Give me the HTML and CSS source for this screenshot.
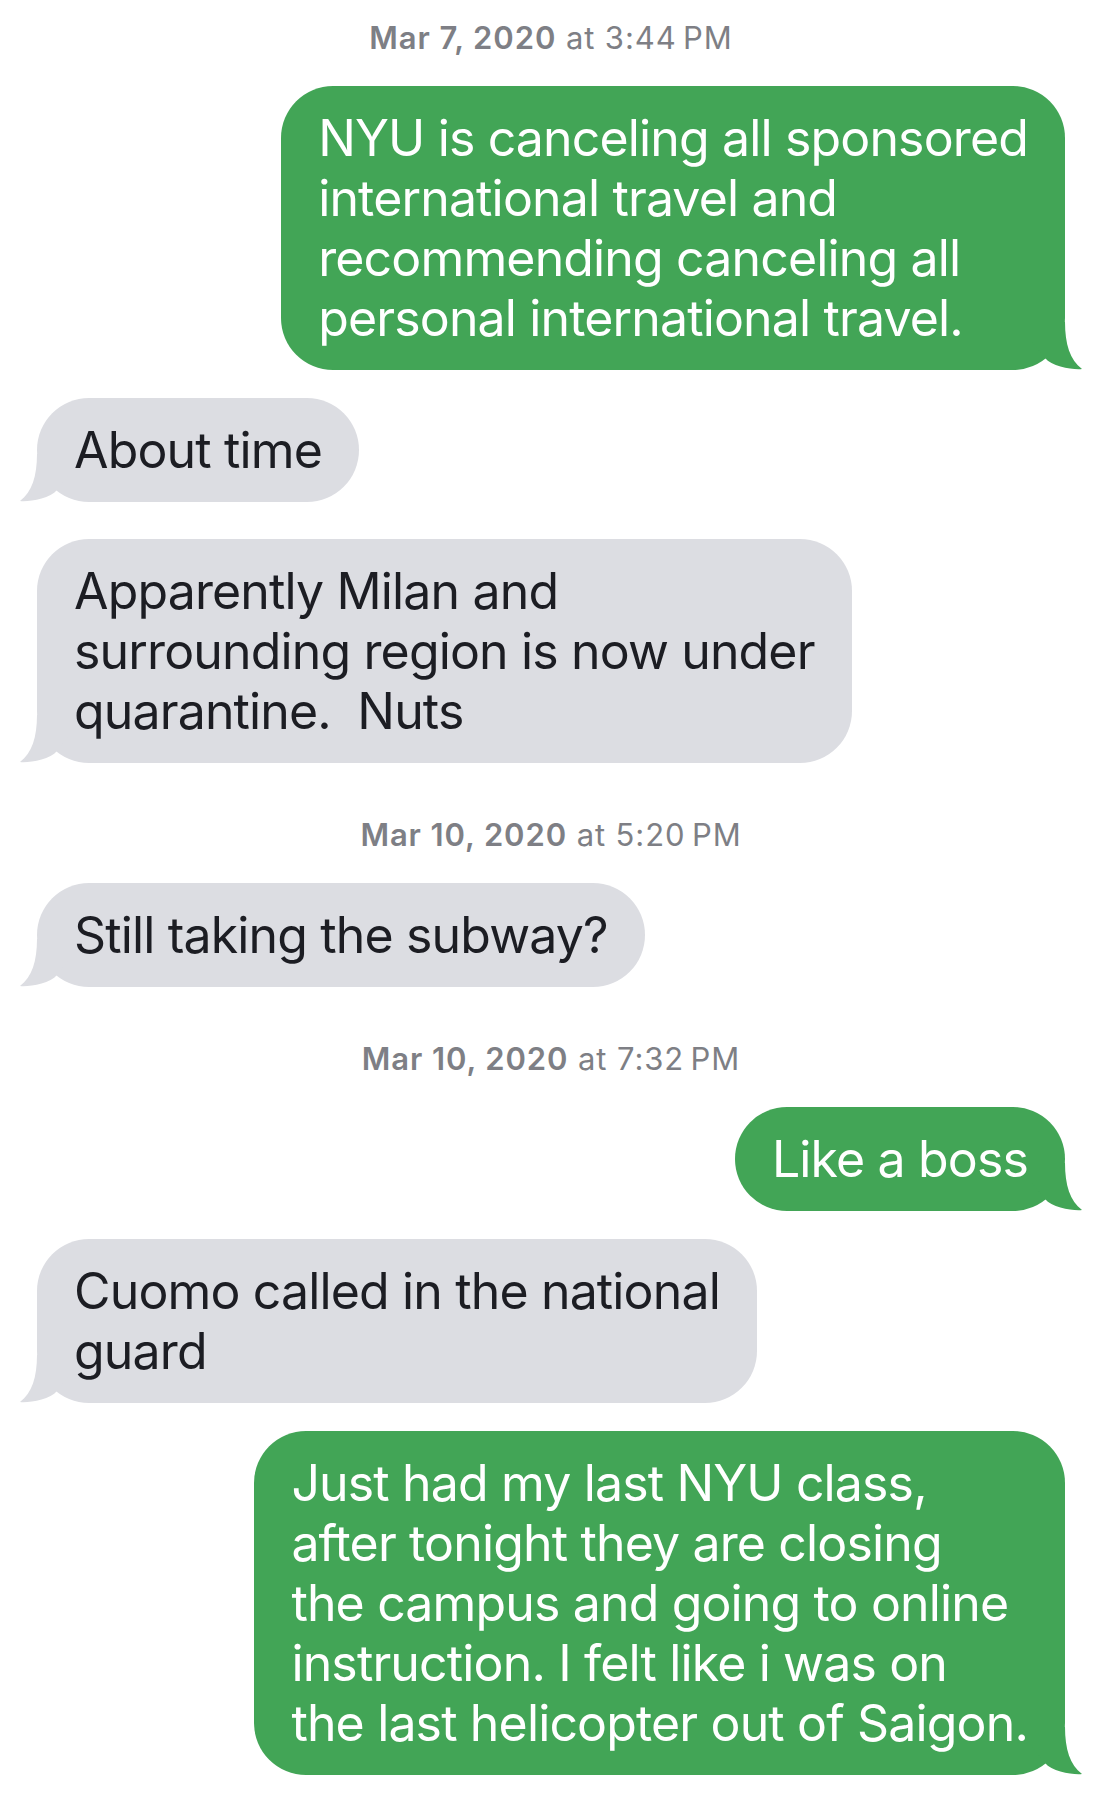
FILE: index.html
```html
<!DOCTYPE html>
<html lang="en">
<head>
  <meta charset="UTF-8" />
  <title>Messages</title>
  <link rel="stylesheet" href="styles.css">
</head>
<body>
  <div class="thread">
    <div class="stamp"><b>Mar 7, 2020</b> at 3:44&#8201;PM</div>

    <div class="msg me">
      <div class="bubble">NYU is canceling all sponsored<br>international travel and<br>recommending canceling all<br>personal international travel.
        <svg class="tail" viewBox="0 0 50 48"><path d="M33 0C33 22 38 38 50 47C42 48 20 45 13 36L0 20L0 0Z"/></svg>
      </div>
    </div>

    <div class="msg them">
      <div class="bubble">About time
        <svg class="tail" viewBox="0 0 50 48"><path d="M33 0C33 22 38 38 50 47C42 48 20 45 13 36L0 20L0 0Z"/></svg>
      </div>
    </div>

    <div class="msg them wide-gap">
      <div class="bubble">Apparently Milan and<br>surrounding region is now under<br>quarantine.&nbsp; Nuts
        <svg class="tail" viewBox="0 0 50 48"><path d="M33 0C33 22 38 38 50 47C42 48 20 45 13 36L0 20L0 0Z"/></svg>
      </div>
    </div>

    <div class="stamp"><b>Mar 10, 2020</b> at 5:20&#8201;PM</div>

    <div class="msg them">
      <div class="bubble">Still taking the subway?
        <svg class="tail" viewBox="0 0 50 48"><path d="M33 0C33 22 38 38 50 47C42 48 20 45 13 36L0 20L0 0Z"/></svg>
      </div>
    </div>

    <div class="stamp"><b>Mar 10, 2020</b> at 7:32&#8201;PM</div>

    <div class="msg me">
      <div class="bubble">Like a boss
        <svg class="tail" viewBox="0 0 50 48"><path d="M33 0C33 22 38 38 50 47C42 48 20 45 13 36L0 20L0 0Z"/></svg>
      </div>
    </div>

    <div class="msg them">
      <div class="bubble">Cuomo called in the national<br>guard
        <svg class="tail" viewBox="0 0 50 48"><path d="M33 0C33 22 38 38 50 47C42 48 20 45 13 36L0 20L0 0Z"/></svg>
      </div>
    </div>

    <div class="msg me">
      <div class="bubble">Just had my last NYU class,<br>after tonight they are closing<br>the campus and going to online<br>instruction. I felt like i was on<br>the last helicopter out of Saigon.
        <svg class="tail" viewBox="0 0 50 48"><path d="M33 0C33 22 38 38 50 47C42 48 20 45 13 36L0 20L0 0Z"/></svg>
      </div>
    </div>
  </div>
</body>
</html>
```

FILE: styles.css
```css
body { margin: 0; background: #fff; font-family: Inter, "Noto Sans", sans-serif; }
.thread { display: flex; flex-direction: column; padding: 18px 35px 0 37px; }

.stamp { margin: 52px 0 28px; text-align: center; font-size: 31px; line-height: 40px; letter-spacing: 0.9px; color: #7e7f85; }
.stamp:first-child { margin-top: 0; }
.stamp b { font-weight: 600; }

.msg { display: flex; }
.msg + .msg { margin-top: 28px; }
.msg.wide-gap { margin-top: 37px; }
.me { justify-content: flex-end; }
.them { justify-content: flex-start; }

.bubble { position: relative; padding: 22px 37px; border-radius: 52px; font-size: 50px; line-height: 60px; letter-spacing: -0.85px; }
.me .bubble { background: #42a556; color: #fff; }
.them .bubble { background: #dcdde2; color: #1c1d23; }

.tail { position: absolute; bottom: 0; width: 50px; height: 48px; }
.me .tail { right: -17px; fill: #42a556; }
.them .tail { left: -17px; fill: #dcdde2; transform: scaleX(-1); }
```
